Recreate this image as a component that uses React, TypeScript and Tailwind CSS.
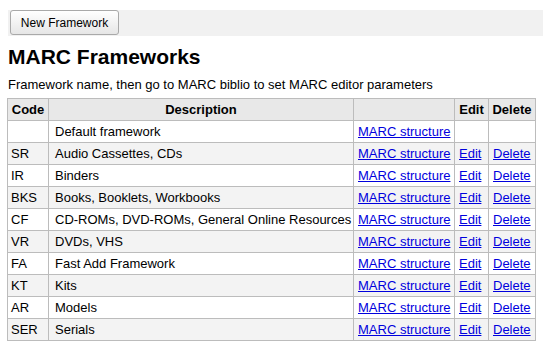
import React from "react";

const rows = [
  { code: "", desc: "Default framework", actions: false },
  { code: "SR", desc: "Audio Cassettes, CDs", actions: true },
  { code: "IR", desc: "Binders", actions: true },
  { code: "BKS", desc: "Books, Booklets, Workbooks", actions: true },
  { code: "CF", desc: "CD-ROMs, DVD-ROMs, General Online Resources", actions: true },
  { code: "VR", desc: "DVDs, VHS", actions: true },
  { code: "FA", desc: "Fast Add Framework", actions: true },
  { code: "KT", desc: "Kits", actions: true },
  { code: "AR", desc: "Models", actions: true },
  { code: "SER", desc: "Serials", actions: true },
];

const App = () => {
  return (
    <div
      className="bg-white text-black w-[543px] h-[351px] overflow-hidden pt-[10px]"
      style={{ fontFamily: '"Liberation Sans", Arial, sans-serif' }}
    >
      <div className="ml-[8px] h-[26px] bg-[#f1f1f1] pl-[2px] flex items-start">
        <button className="h-[25px] w-[109px] text-[12px] border border-[#a9a9a9] rounded-[3px] bg-gradient-to-b from-white to-[#e6e6e6] text-black">
          New Framework
        </button>
      </div>

      <h1 className="ml-[8px] mt-[9px] text-[21px] font-bold leading-[24px]">MARC Frameworks</h1>
      <p className="ml-[8px] mt-[8px] text-[13px] leading-[16px]">
        Framework name, then go to MARC biblio to set MARC editor parameters
      </p>

      <table className="ml-[7px] mt-[5px] border-collapse text-[13px] w-[528px] table-fixed">
        <colgroup>
          <col className="w-[41px]" />
          <col className="w-[305px]" />
          <col className="w-[101px]" />
          <col className="w-[34px]" />
          <col className="w-[47px]" />
        </colgroup>
        <thead>
          <tr className="bg-[#e8e8e8] h-[22px]">
            <th className="border border-[#bcbcbc] px-[3px] font-bold">Code</th>
            <th className="border border-[#bcbcbc] px-[3px] font-bold">Description</th>
            <th className="border border-[#bcbcbc] px-[3px]"></th>
            <th className="border border-[#bcbcbc] px-[3px] font-bold">Edit</th>
            <th className="border border-[#bcbcbc] px-[3px] font-bold">Delete</th>
          </tr>
        </thead>
        <tbody>
          {rows.map((r, i) => (
            <tr key={i} className={i % 2 === 1 ? "bg-[#f3f3f3] h-[22px]" : "bg-white h-[22px]"}>
              <td className="border border-[#bcbcbc] px-[3px] py-0 whitespace-nowrap">{r.code}</td>
              <td className="border border-[#bcbcbc] pl-[6px] pr-[3px] py-0 whitespace-nowrap">{r.desc}</td>
              <td className="border border-[#bcbcbc] px-[4px] py-0 whitespace-nowrap">
                <a href="#" className="text-[#0000dd] underline">MARC structure</a>
              </td>
              <td className="border border-[#bcbcbc] px-[4px] py-0 whitespace-nowrap">
                {r.actions && <a href="#" className="text-[#0000dd] underline">Edit</a>}
              </td>
              <td className="border border-[#bcbcbc] px-[4px] py-0 whitespace-nowrap">
                {r.actions && <a href="#" className="text-[#0000dd] underline">Delete</a>}
              </td>
            </tr>
          ))}
        </tbody>
      </table>
    </div>
  );
};

export default App;
